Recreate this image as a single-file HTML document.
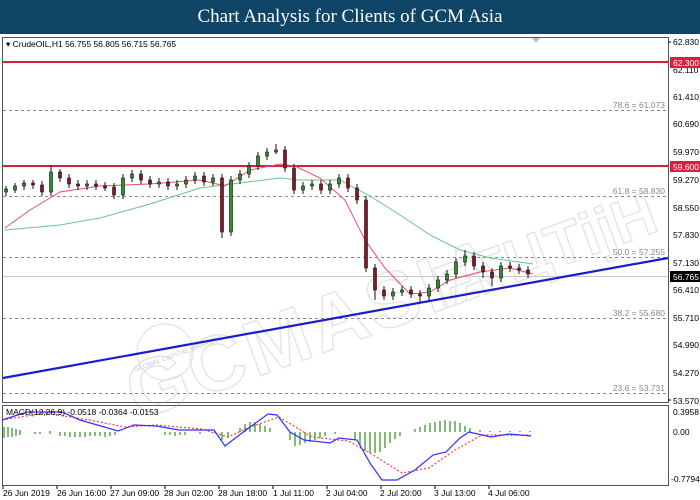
<!DOCTYPE html>
<html><head><meta charset="utf-8"><style>
html,body{margin:0;padding:0;width:700px;height:500px;overflow:hidden;background:#fff;font-family:"Liberation Sans",sans-serif}
.hdr{position:absolute;left:0;top:0;width:700px;height:34px;background:#0e4466;color:#fff;font-family:"Liberation Serif",serif;font-size:19px;text-align:center;line-height:34px}
svg{position:absolute;left:0;top:0}
</style></head><body>
<div class="hdr">Chart Analysis for Clients of GCM Asia</div>
<svg width="700" height="500" viewBox="0 0 700 500" font-family="Liberation Sans, sans-serif">
<rect x="0" y="34" width="700" height="466" fill="#fff"/>
<rect x="2.5" y="37.5" width="666" height="365" fill="none" stroke="#555"/>
<rect x="2.5" y="405.5" width="666" height="80" fill="none" stroke="#555"/>
<g transform="rotate(-20 330 260)" opacity="0.25">
<text x="95" y="345" font-size="78" font-weight="bold" fill="none" stroke="#999" stroke-width="1.5" letter-spacing="4">GCMASIA</text>
<text x="420" y="345" font-size="60" font-weight="bold" fill="none" stroke="#999" stroke-width="1.5">ЕГЦТijH</text>
</g>
<circle cx="165" cy="352" r="28" fill="none" stroke="#ddd" stroke-width="1"/>
<text x="135" y="372" font-size="7" fill="#ccc" transform="rotate(-20 135 372)">GLOBAL CAPITAL MARKETS</text>
<g stroke="#888" stroke-dasharray="3,3" stroke-width="1">
<line x1="3" y1="110.5" x2="668" y2="110.5"/>
<line x1="3" y1="196.5" x2="668" y2="196.5"/>
<line x1="3" y1="257.5" x2="668" y2="257.5"/>
<line x1="3" y1="318.5" x2="668" y2="318.5"/>
<line x1="3" y1="393.5" x2="668" y2="393.5"/>
</g>
<line x1="3" y1="276.5" x2="668" y2="276.5" stroke="#c8c8c8"/>
<line x1="3" y1="62" x2="668" y2="62" stroke="#dc1e3c" stroke-width="2"/>
<line x1="3" y1="166" x2="668" y2="166" stroke="#dc1e3c" stroke-width="2"/>
<g font-size="8.5" fill="#888" text-anchor="end">
<text x="665" y="108">78.6 = 61.073</text>
<text x="665" y="194">61.8 = 58.830</text>
<text x="665" y="255">50.0 = 57.255</text>
<text x="665" y="316">38.2 = 55.680</text>
<text x="665" y="391">23.6 = 53.731</text>
</g>
<polyline fill="none" stroke="#6cc58a" stroke-width="1" points="5,230 60,225 100,218 150,204 200,188 240,183 280,178 300,180 340,180 370,196 400,215 430,235 460,250 490,258 533,264"/>
<polyline fill="none" stroke="#e8506a" stroke-width="1" points="5,228 30,210 60,192 100,186 150,184 200,180 225,186 250,170 280,164 295,166 320,178 345,200 365,240 385,268 410,294 430,292 450,280 480,272 510,268 533,274"/>
<path stroke="#111" stroke-width="1" fill="none" d="M6 186V196M15 183V193M24 180V190M33 180V189M42 181V196M51 165V196M60 169V182M69 174V188M78 180V190M87 180V190M96 180V190M105 182V191M114 183V199M123 174V199M132 170V182M141 170V184M150 176V188M159 178V188M168 178V190M177 180V190M186 176V188M195 172V184M204 172V186M213 174V186M222 174V238M231 176V236M240 170V184M249 162V178M258 152V170M267 148V160M276 144V154M285 146V172M294 164V194M303 182V194M312 180V190M321 180V194M330 180V194M339 174V188M348 174V192M357 184V204M366 196V272M375 264V300M384 286V300M393 288V300M402 286V296M411 286V298M420 290V302M429 284V300M438 276V292M447 270V284M456 258V278M465 250V266M474 252V270M483 262V278M492 268V286M501 262V282M510 262V272M519 264V274M528 266V278"/>
<g fill="#2f8f2f" stroke="#111" stroke-width="0.6">
<rect x="4.5" y="189" width="3" height="3"/><rect x="13.5" y="186" width="3" height="4"/><rect x="22.5" y="183" width="3" height="3"/><rect x="49.5" y="172" width="3" height="20"/><rect x="85.5" y="184" width="3" height="2"/><rect x="121.5" y="178" width="3" height="17"/><rect x="130.5" y="174" width="3" height="4"/><rect x="157.5" y="182" width="3" height="2"/><rect x="175.5" y="184" width="3" height="2"/><rect x="184.5" y="180" width="3" height="4"/><rect x="193.5" y="176" width="3" height="4"/><rect x="211.5" y="178" width="3" height="4"/><rect x="229.5" y="180" width="3" height="52"/><rect x="238.5" y="174" width="3" height="6"/><rect x="247.5" y="166" width="3" height="8"/><rect x="256.5" y="156" width="3" height="10"/><rect x="265.5" y="152" width="3" height="4"/><rect x="274.5" y="150" width="3" height="2"/><rect x="301.5" y="186" width="3" height="4"/><rect x="310.5" y="184" width="3" height="2"/><rect x="328.5" y="184" width="3" height="6"/><rect x="337.5" y="178" width="3" height="6"/><rect x="391.5" y="292" width="3" height="4"/><rect x="400.5" y="290" width="3" height="2"/><rect x="427.5" y="288" width="3" height="8"/><rect x="436.5" y="280" width="3" height="8"/><rect x="445.5" y="274" width="3" height="6"/><rect x="454.5" y="262" width="3" height="12"/><rect x="463.5" y="256" width="3" height="6"/><rect x="499.5" y="266" width="3" height="12"/>
</g>
<g fill="#8a1428" stroke="#111" stroke-width="0.6">
<rect x="31.5" y="183" width="3" height="2"/><rect x="40.5" y="185" width="3" height="7"/><rect x="58.5" y="172" width="3" height="6"/><rect x="67.5" y="178" width="3" height="6"/><rect x="76.5" y="184" width="3" height="2"/><rect x="94.5" y="184" width="3" height="2"/><rect x="103.5" y="186" width="3" height="2"/><rect x="112.5" y="187" width="3" height="8"/><rect x="139.5" y="174" width="3" height="6"/><rect x="148.5" y="180" width="3" height="4"/><rect x="166.5" y="182" width="3" height="4"/><rect x="202.5" y="176" width="3" height="6"/><rect x="220.5" y="178" width="3" height="54"/><rect x="283.5" y="150" width="3" height="18"/><rect x="292.5" y="168" width="3" height="22"/><rect x="319.5" y="184" width="3" height="6"/><rect x="346.5" y="178" width="3" height="10"/><rect x="355.5" y="188" width="3" height="12"/><rect x="364.5" y="200" width="3" height="68"/><rect x="373.5" y="268" width="3" height="22"/><rect x="382.5" y="290" width="3" height="6"/><rect x="409.5" y="290" width="3" height="4"/><rect x="418.5" y="294" width="3" height="2"/><rect x="472.5" y="256" width="3" height="10"/><rect x="481.5" y="266" width="3" height="6"/><rect x="490.5" y="272" width="3" height="6"/><rect x="508.5" y="266" width="3" height="2"/><rect x="517.5" y="268" width="3" height="2"/><rect x="526.5" y="270" width="3" height="4"/>
</g>
<line x1="3" y1="378" x2="668" y2="258" stroke="#1a1ad0" stroke-width="2.2"/>
<polygon points="532,38 540,38 536,43" fill="#bbb"/>
<text x="6" y="47" font-size="8.5" fill="#000">▾ CrudeOIL,H1  56.755 56.805 56.715 56.765</text>
<g font-size="8.5" fill="#000">
<text x="673" y="45">62.830</text><text x="673" y="73">62.110</text><text x="673" y="100">61.410</text><text x="673" y="127">60.690</text><text x="673" y="155">59.970</text><text x="673" y="183">59.270</text><text x="673" y="211">58.550</text><text x="673" y="238">57.830</text><text x="673" y="266">57.130</text><text x="673" y="293">56.410</text><text x="673" y="321">55.710</text><text x="673" y="348">54.990</text><text x="673" y="376">54.270</text><text x="673" y="404">53.570</text>
</g>
<rect x="670" y="57" width="30" height="11" fill="#dc1e3c"/><text x="673" y="66" font-size="8.5" fill="#fff">62.300</text>
<rect x="670" y="161" width="30" height="11" fill="#dc1e3c"/><text x="673" y="170" font-size="8.5" fill="#fff">59.600</text>
<rect x="670" y="271" width="30" height="11" fill="#000"/><text x="673" y="280" font-size="8.5" fill="#fff">56.765</text>
<g stroke="#000"><line x1="668" y1="42" x2="671" y2="42"/><line x1="668" y1="400" x2="671" y2="400"/></g>
<path stroke="#3a9a2a" stroke-width="1.3" d="M4 427V438M8 427V437M12 428V437M16 429V436M20 430V435M35 432V434M40 432V434M50 431V434M60 432V436M65 432V436M70 432V437M75 432V437M80 432V437M85 432V437M90 432V436M95 432V436M100 432V436M105 432V437M110 432V436M115 432V435M165 432V435M170 432V435M175 432V436M180 432V435M185 432V435M200 432V434M215 431V433M222 432V440M228 432V438M240 428V432M245 424V432M250 422V432M255 422V432M260 424V432M265 426V432M270 428V432M290 432V440M295 432V446M300 432V445M305 432V443M310 432V442M315 432V440M320 432V438M325 432V436M335 432V434M355 432V440M360 432V446M365 432V451M370 432V453M375 432V453M380 432V452M385 432V448M390 432V443M395 432V439M400 432V436M415 429V432M420 427V432M425 425V432M430 423V432M435 422V432M440 421V432M445 420V432M450 421V432M455 421V432M460 423V432M465 426V432M470 428V432M480 430V432M490 431V432M500 431V432M510 431V432M520 431V432M530 431V432"/>
<polyline fill="none" stroke="#ff3b3b" stroke-width="1.2" stroke-dasharray="2,2" points="2,420 45,413 89,420 125,427 156,425 201,429 228,437 250,427 279,417 312,437 348,441 370,453 402,473 429,468 455,450 482,435 531,435"/>
<polyline fill="none" stroke="#3030ff" stroke-width="1.2" points="2,420 27,412 62,412 80,420 118,431 134,425 156,426 179,430 214,430 225,446 246,430 268,414 277,415 290,432 304,440 330,443 339,438 357,440 370,463 382,480 397,480 415,470 433,455 446,452 460,438 469,432 491,437 509,434 531,436"/>
<text x="6" y="415" font-size="8.5" fill="#000">MACD(12,26,9) -0.0518 -0.0364 -0.0153</text>
<g font-size="8.5" fill="#000">
<text x="673" y="415">0.3958</text><text x="673" y="435">0.00</text><text x="671" y="482">-0.7794</text>
</g>
<g stroke="#000"><path d="M3 486V489M57 486V489M111 486V489M165 486V489M219 486V489M273 486V489M327 486V489M381 486V489M435 486V489M489 486V489"/></g>
<g font-size="8.5" fill="#000">
<text x="3" y="496">26 Jun 2019</text><text x="57" y="496">26 Jun 16:00</text><text x="110" y="496">27 Jun 09:00</text><text x="164" y="496">28 Jun 02:00</text><text x="218" y="496">28 Jun 18:00</text><text x="273" y="496">1 Jul 11:00</text><text x="326" y="496">2 Jul 04:00</text><text x="380" y="496">2 Jul 20:00</text><text x="434" y="496">3 Jul 13:00</text><text x="488" y="496">4 Jul 06:00</text>
</g>
</svg>
</body></html>
